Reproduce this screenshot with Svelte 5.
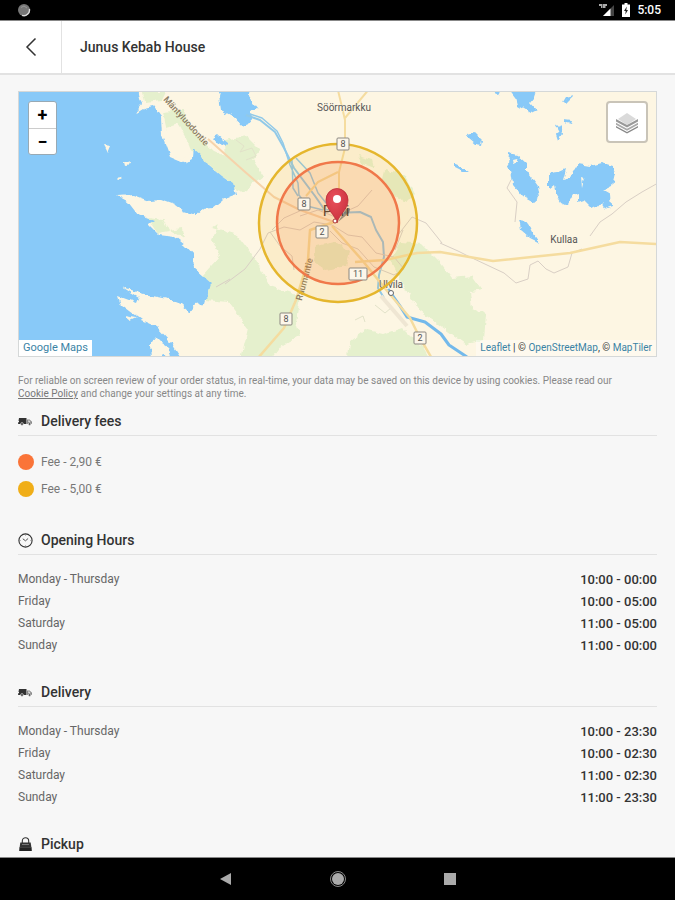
<script lang="ts">
    type Row = {
        days: string;
        time: string;
    };

    type Schedule = {
        title: string;
        icon: 'clock' | 'truck' | 'bag';
        rows: Row[];
    };

    const fees = [
        {label: 'Fee - 2,90 €', level: 'near'},
        {label: 'Fee - 5,00 €', level: 'far'}
    ];

    const schedules: Schedule[] = [
        {
            title: 'Opening Hours',
            icon: 'clock',
            rows: [
                {days: 'Monday - Thursday', time: '10:00 - 00:00'},
                {days: 'Friday', time: '10:00 - 05:00'},
                {days: 'Saturday', time: '11:00 - 05:00'},
                {days: 'Sunday', time: '11:00 - 00:00'}
            ]
        },
        {
            title: 'Delivery',
            icon: 'truck',
            rows: [
                {days: 'Monday - Thursday', time: '10:00 - 23:30'},
                {days: 'Friday', time: '10:00 - 02:30'},
                {days: 'Saturday', time: '11:00 - 02:30'},
                {days: 'Sunday', time: '11:00 - 23:30'}
            ]
        },
        {title: 'Pickup', icon: 'bag', rows: []}
    ];

    const shields = [
        {x: 343, y: 144, road: '8'},
        {x: 304, y: 204, road: '8'},
        {x: 322, y: 232, road: '2'},
        {x: 358, y: 274, road: '11'},
        {x: 286, y: 319, road: '8'},
        {x: 420, y: 338, road: '2'}
    ];
</script>

{#snippet icon(name: string)}
    <svg class="icon" viewBox="0 0 15 15" aria-hidden="true">
        {#if name === 'truck'}
            <path d="M1 4h7.500v6H0l.4-2H1V7H.5z" fill="#333" />
            <path d="M9 5.500h2.600l2.400 2.300V10H9z" fill="#888" />
            <path d="M10.200 6.400h1.200l1.200 1.400h-2.400z" fill="#f7f7f7" />
            <circle cx="4" cy="10" r="1.400" fill="#333" stroke="#f7f7f7" stroke-width=".6" />
            <circle cx="11.600" cy="10" r="1.400" fill="#555" stroke="#f7f7f7" stroke-width=".6" />
        {:else if name === 'clock'}
            <circle cx="7.500" cy="7.500" r="6.600" fill="none" stroke="#333" stroke-width="1.100" />
            <path d="M4.800 5.800l2.700 2 2.600-2.300" fill="none" stroke="#555" stroke-width="1" />
            <path d="M7.500 1.500v1.200M7.500 12.300v1.200M1.500 7.500h1.200M12.300 7.500h1.200" stroke="#777" stroke-width=".7" />
        {:else}
            <path d="M4.300 6V4a3.200 3.200 0 0 1 6.400 0v2" fill="none" stroke="#333" stroke-width="1.100" />
            <path d="M2.300 5.500h10.400l.7 5H1.600z" fill="#333" />
            <path d="M1.400 10.200h12.200l.2 3.800H1.200z" fill="#222" />
            <path d="M4 7.500h7" stroke="#888" stroke-width=".8" />
        {/if}
    </svg>
{/snippet}

<div class="screen">
    <div class="status-bar">
        <svg class="sync" viewBox="0 0 14 14" aria-hidden="true">
            <circle cx="7" cy="7" r="6" fill="#777" />
            <path d="M5 12.300A5.600 5.600 0 0 0 12.400 6" fill="none" stroke="#ddd" stroke-width="1.400" />
            <path d="M4 4.500l3-1.500 3 2" fill="none" stroke="#999" />
        </svg>
        <div class="status-right">
            <svg class="signal" viewBox="0 0 16 14" aria-hidden="true">
                <path d="M0 1h3.500v4H2V3H0zM4 1h4v2H6.500v2H4z" fill="#aaa" />
                <path d="M15 2v11H4z" fill="#444" />
                <path d="M11.500 5.500V13H4z" fill="#fff" />
            </svg>
            <svg class="battery" viewBox="0 0 8 14" aria-hidden="true">
                <path d="M2.500 0h3v1.500H8V14H0V1.500h2.500z" fill="#fff" />
                <path d="M4.800 3.500L2 8h1.700l-.4 3.500L6 7H4.300z" fill="#222" />
            </svg>
            <span class="time">5:05</span>
        </div>
    </div>

    <header>
        <button class="back" type="button" aria-label="Back">
            <svg viewBox="0 0 12 20" aria-hidden="true">
                <path d="M10.500 1.500L2 10l8.500 8.500" fill="none" stroke="#333" stroke-width="1.500" />
            </svg>
        </button>
        <h1>Junus Kebab House</h1>
    </header>

    <main>
        <div class="map">
            <svg class="tiles" viewBox="18 92 639 264" preserveAspectRatio="xMidYMid slice" role="img" aria-label="Delivery area">
                <defs>
                    <filter id="coast" x="-5%" y="-5%" width="110%" height="110%">
                        <feTurbulence type="fractalNoise" baseFrequency="0.14" numOctaves="2" seed="4" />
                        <feDisplacementMap in="SourceGraphic" scale="6" xChannelSelector="R" yChannelSelector="G" />
                    </filter>
                    <radialGradient id="pin" cx="40%" cy="30%" r="75%">
                        <stop offset="0" stop-color="#e8505b" />
                        <stop offset="1" stop-color="#c92f3d" />
                    </radialGradient>
                </defs>
                <rect x="0" y="80" width="700" height="290" fill="#fdf6e3" />

                <!-- forest -->
                <g fill="#e5f0cd" filter="url(#coast)">
                    <path d="M163 112l20-2 10 22 20 18 18 8 6 24-14-4-20-18-12-8-10-14-14-6z" />
                    <path d="M142 92h24l-4 8-18 2zM225 140l22-4 14 14-8 10 10 16-20 16-16-6z" />
                    <path d="M212 228l26 8 18 24 14 26 30 10-4 26 4 14-18 10-14 18h-28l8-36-20-26-44-4 18-22 18-20-8-16 8-18z" />
                    <path d="M147 217l16 2 6 12-12 2zM170 230l12-2 2 10z" />
                    <path d="M385 170l20 6 10 18-8 8-16-8-8-16zM358 156l14 4 2 8-12-4z" />
                    <path d="M316 246l20-4 14 10-4 14-20 4-12-8z" />
                    <path d="M400 242l22 2 18 18 12 16 20-2 10 14-12 2 2 16 14 6-2 26-18 4-28-20-20-14-18-30-10-20z" />
                    <path d="M350 342l16-12 18 4 18-6 20 20 6 10h-80z" />
                </g>
                <!-- fields inside the western peninsula -->
                <path d="M166 128l12-4 10 18 4 10-10 8-10-6z" fill="#fdf6e3" filter="url(#coast)" />

                <!-- sea and lakes -->
                <g fill="#88c9f8" filter="url(#coast)">
                    <path d="M0 80H138l1 14 3 11-6 8 8-5 9-2 8 11 1 18 8 22 14 6 9-5 1-9 9 8 6 9 12 10 12 8 3 11-14 5-10 8-9 1-7 6-13-4-8-6-14-5-12 1-16-6-16 1 11 6 10 13 16 6-5 4 10 10 16 2 10 8 9 10 1 14 16 14-6 20-10 1-6 8-9-8-13-5-24-5-22-7 18 11-2 5-19-7 3 9 20 15 16 7 12 13 17 26-10 15H0z" />
                    <path d="M222 84h28l-1 12 9 12-8 3 2 11-10 4-8-9-13-7-2-14z" />
                    <path d="M213 138l5-3 10 8-3 3-8-3zM223 182l7 2 2 8-4 6-5-1z" />
                    <path d="M510 90h26l-3 9-3 4 6 7-6 3-12-7-2-8zM493 88h8l-3 9zM563 102l3-5 8-2-4 4-5 5zM564 120l8 1-1 3-7-2zM556 126l6-2-1 6 1 4-4 6-2-6 3-2z" />
                    <path d="M468 134l6-2 8 8-1 5-6-1-6-5zM453 163l5 2 10 7-5 0-10-5z" />
                    <path d="M509 153l8 2 10 9 0 7 11 15 2 12-6 5-11-6-10-12-2-15-3-7z" />
                    <path d="M549 174l8-1 9-4-3 11 6-2 9-14 12 2 12-3 10 3 3 7-3 13-8 4 7 4 1 12-6 2-4-6-6 7-6-3-6-6-6 2 0-8-6 2-5 9-6-3-5-8-2-8-5 4z" />
                    <path d="M519 219l6 1 6 8 3 6 6 9-10-5-9-8z" />
                </g>
                <g fill="#fdf6e3" filter="url(#coast)">
                    <path d="M104 145l7 1-3 7zM125 161l4 0 1 3-4 1zM101 178l3 2M119 176l3 2-3 2-3-1zM108 180l6 2zM512 159l4-1 2 4-5 2zM582 178l3 1-2 8z" />
                    <path d="M124 316l12 2-6 3zM150 345l6-8 6 6 6 4 2 10-8-2-4 4-7 0zM134 148l3-1z" />
                </g>

                <!-- river -->
                <g fill="none" stroke="#91c9e8" stroke-linejoin="round">
                    <path d="M246 115l14 5 15 12 9 16 10 20 9 12 12 16 9 13 13 4 23-1 11 5 5 13 7 12 1 15-5 18-1 13 6 10" stroke-width="2" />
                    <path d="M250 114l12 4 15 13 6 12 7 22 8 18 1 12 8 11 16 4M292 160l1 28 5 8M296 158l14 15 8 20 8 10" stroke-width="1.500" />
                    <path d="M388 289l12 17 7 11 18 5 16 12 8 11 18 12" stroke="#73b9eb" stroke-width="3" />
                </g>

                <!-- minor roads -->
                <g fill="none" stroke="#d9cfc5" stroke-width="1">
                    <path d="M225 284l20-15 15-20 8-16 16-6 16 3 14-8 18 3 16 10 14 2 14 16 18 4 10 12-10 6-20-8-16-18-16-6-12-12M270 232l10 14 12 10 2 14M340 214l18-8 14-16M302 210l-18 8-12 12M300 216l18-6 20 8" />
                    <path d="M440 243l18 8 12 6 34 16 12 10 12-4 2-14 8-4 8 8 8 4 14-6 4-14 10-4M511 180l-4 8 10 14-2 20M590 236l10-14 12-8 14-12 16-10 16-9" />
                    <path d="M398 235l14-18 14 6 16 20M395 250l8-20M216 287l14-8" />
                    <path d="M236 140l8 6-4 6 12-4 4 8-10 4M355 320l8-4 2 6M375 305l10 8 6-5 8 10" stroke="#e2e2c9" />
                </g>

                <!-- main roads -->
                <g fill="none" stroke="#f5dc9f" stroke-width="2.500" stroke-linejoin="round">
                    <path d="M208 139l36 32 30 26 26 13 34 12" stroke="#f6d3ab" stroke-width="2" />
                    <path d="M337 86l8 34 0 28-6 24v36M370 88l-25 30M338 172l-20 10-12 14" stroke-width="2" />
                    <path d="M334 222l-24 8-2 30-12 40-12 28-26 30" />
                    <path d="M332 226l30 34 26 32 22 26 10 20 14 24M355 262l30-2 32-7 23-1 53 9 77-8 50-11 37 2" />
                </g>
                <path d="M381 296l26 30" stroke="#efe6d3" stroke-width="4" />

                <g class="places">
                    <text x="344" y="111">Söörmarkku</text>
                    <text x="564" y="243">Kullaa</text>
                    <text x="391" y="288">Ulvila</text>
                    <text class="city" x="336" y="216">Pori</text>
                </g>
                <text class="road" transform="translate(166 97) rotate(48)" x="0" y="4">Mäntyluodontie</text>
                <text class="road" transform="translate(298 300) rotate(-75)" x="0" y="4">Raumantie</text>
                <circle cx="391" cy="293" r="2.500" fill="#fff" stroke="#666" />

                <g class="zones">
                    <circle cx="338" cy="223" r="79" fill="#f0ae18" fill-opacity=".12" stroke="#e5b62d" />
                    <circle cx="338" cy="223" r="61" fill="#fa7438" fill-opacity=".16" stroke="#f0784a" />
                </g>

                {#each shields as {x, y, road}}
                    <rect x={x - 3 - 3 * road.length} y={y - 6} width={6 + 6 * road.length} height="12" rx="1" fill="#fcf6ea" stroke="#8b8780" />
                    <text class="shield" {x} y={y + 3}>{road}</text>
                {/each}

                <path d="M338 222l8-13q6-3 3 4z" fill="#333" opacity=".45" />
                <path d="M337 223c-2-9-11-13-11-23a11 11.500 0 0 1 22 0c0 10-9 14-11 23z" fill="url(#pin)" stroke="#b92c38" stroke-width=".8" />
                <circle cx="337" cy="199" r="4" fill="#fff" />
                <circle cx="335" cy="221" r="2" fill="#fff" stroke="#a33" />
            </svg>

            <div class="zoom-control">
                <button type="button" aria-label="Zoom in">+</button>
                <button type="button" aria-label="Zoom out">−</button>
            </div>
            <button class="layers" type="button" aria-label="Layers">
                <svg viewBox="0 0 26 26" aria-hidden="true">
                    <path d="M13 4l9 6-9 6-9-6z" fill="#dadada" />
                    <path d="M2 10l11 6 11-6v2.500l-11 6-11-6z" fill="#999" />
                    <path d="M2 13.700l11 6 11-6v2l-11 6-11-6z" fill="#aaa" />
                    <path d="M2 17l11 6 11-6v1.500l-11 6-11-6z" fill="#888" />
                </svg>
            </button>
            <a class="google" href="#google-maps">Google Maps</a>
            <div class="attribution">
                <a href="#leaflet">Leaflet</a> | © <a href="#osm">OpenStreetMap</a>, © <a href="#maptiler">MapTiler</a>
            </div>
        </div>

        <p class="note">
            For reliable on screen review of your order status, in real-time, your data may be saved on this device by using cookies. Please read our
            <a href="#cookies">Cookie Policy</a> and change your settings at any time.
        </p>

        <section class="fees">
            <h2>{@render icon('truck')}Delivery fees</h2>
            <ul>
                {#each fees as fee}
                    <li><span class="dot {fee.level}"></span>{fee.label}</li>
                {/each}
            </ul>
        </section>

        {#each schedules as schedule}
            <section>
                <h2>{@render icon(schedule.icon)}{schedule.title}</h2>
                {#if schedule.rows.length}
                    <table>
                        <tbody>
                            {#each schedule.rows as row}
                                <tr>
                                    <th scope="row">{row.days}</th>
                                    <td>{row.time}</td>
                                </tr>
                            {/each}
                        </tbody>
                    </table>
                {/if}
            </section>
        {/each}
    </main>

    <nav>
        <button type="button" aria-label="Back">
            <svg viewBox="0 0 18 18" aria-hidden="true"><path d="M14 3v12L3 9z" fill="#aaa" /></svg>
        </button>
        <button type="button" aria-label="Home">
            <svg viewBox="0 0 18 18" aria-hidden="true">
                <circle cx="9" cy="9" r="7.500" fill="none" stroke="#888" />
                <circle cx="9" cy="9" r="6" fill="#aaa" />
            </svg>
        </button>
        <button type="button" aria-label="Recent apps">
            <svg viewBox="0 0 18 18" aria-hidden="true"><path d="M3 3h12v12H3z" fill="#aaa" /></svg>
        </button>
    </nav>
</div>

<style>
    :global(body) {
        background: #f7f7f7;
    }

    .screen {
        display: flex;
        flex-direction: column;
        height: 100vh;
        font-family: Roboto, "Liberation Sans", sans-serif;
        font-size: 13px;
        color: #333;
    }

    button {
        padding: 0;
        border: none;
        background: none;
        font-family: inherit;
        cursor: pointer;
    }

    .status-bar {
        display: flex;
        flex: none;
        align-items: center;
        justify-content: space-between;
        height: 20px;
        padding: 0 14px 0 17px;
        border-bottom: 1px solid #888;
        background: #000;
    }

    .sync {
        width: 14px;
        height: 14px;
    }

    .status-right {
        display: flex;
        align-items: center;
        gap: 7px;
    }

    .signal {
        width: 16px;
        height: 14px;
    }

    .battery {
        width: 8px;
        height: 14px;
    }

    .time {
        font-size: 12px;
        font-weight: 500;
        color: #fff;
    }

    header {
        display: flex;
        flex: none;
        height: 52px;
        border-bottom: 2px solid #e2e2e2;
        background: #fff;
    }

    .back {
        display: flex;
        align-items: center;
        justify-content: center;
        width: 62px;
        border-right: 1px solid #e2e2e2;
    }

    .back svg {
        width: 12px;
        height: 20px;
    }

    h1 {
        align-self: center;
        margin: 0 0 0 18px;
        font-size: 14px;
        font-weight: 500;
    }

    main {
        flex: 1;
        min-height: 0;
        padding: 16px 18px 0;
        overflow-y: auto;
        scrollbar-width: none;
    }

    .map {
        position: relative;
        height: 264px;
        border: 1px solid #d5d8d8;
        overflow: hidden;
    }

    .tiles {
        display: block;
        width: 100%;
        height: 100%;
    }

    .places text {
        font-size: 10px;
        fill: #555;
        text-anchor: middle;
        stroke: #fdf6e3;
        stroke-width: 1px;
        paint-order: stroke;
    }

    .places .city {
        font-size: 15px;
        fill: #333;
    }

    .road {
        font-size: 9px;
        font-weight: 500;
        fill: #8a7b62;
    }

    .shield {
        font-size: 9px;
        fill: #555;
        text-anchor: middle;
    }

    .zones circle {
        stroke-width: 2.5px;
    }

    .zoom-control {
        position: absolute;
        top: 9px;
        left: 9px;
        border: 1px solid #98a9b4;
        border-radius: 3px;
        background: #fff;
        overflow: hidden;
    }

    .zoom-control button {
        display: block;
        width: 27px;
        height: 26px;
        font-size: 18px;
        font-weight: 700;
        line-height: 24px;
        color: #000;
    }

    .zoom-control button + button {
        border-top: 1px solid #ccc;
    }

    .layers {
        position: absolute;
        top: 9px;
        right: 8px;
        display: flex;
        align-items: center;
        justify-content: center;
        width: 42px;
        height: 42px;
        border: 2px solid #c9c4b8;
        border-radius: 4px;
        background: #fff;
    }

    .layers svg {
        width: 26px;
        height: 26px;
    }

    .map a {
        color: #3b83a5;
        text-decoration: none;
    }

    .google {
        position: absolute;
        bottom: 0;
        left: 0;
        padding: 0 4px;
        background: #fff;
        font-size: 11px;
        line-height: 16px;
    }

    .attribution {
        position: absolute;
        right: 0;
        bottom: 0;
        padding: 0 4px;
        background: rgba(255, 255, 255, 0.4);
        font-size: 10px;
        line-height: 16px;
    }

    .note {
        margin: 17px 0 7px;
        font-size: 10px;
        line-height: 13px;
        color: #888;
    }

    .note a {
        color: #777;
        white-space: nowrap;
    }

    section {
        margin-bottom: 22px;
    }

    section.fees {
        margin-bottom: 24px;
    }

    h2 {
        display: flex;
        align-items: center;
        gap: 8px;
        margin: 0;
        border-bottom: 1px solid #e2e2e2;
        font-size: 14px;
        font-weight: 500;
        line-height: 28px;
    }

    .icon {
        width: 15px;
        height: 15px;
    }

    ul {
        margin: 0;
        padding: 12px 0 0;
        list-style: none;
    }

    li {
        display: flex;
        align-items: center;
        gap: 7px;
        height: 27px;
        font-size: 12px;
        color: #777;
    }

    .dot {
        width: 16px;
        height: 16px;
        border-radius: 50%;
    }

    .near {
        background: #fa7438;
    }

    .far {
        background: #f0ae18;
    }

    table {
        width: 100%;
        margin-top: 13px;
        border-collapse: collapse;
    }

    th,
    td {
        height: 22px;
        padding: 0;
    }

    th {
        font-size: 12px;
        font-weight: 400;
        text-align: left;
        color: #666;
    }

    td {
        font-weight: 500;
        text-align: right;
    }

    nav {
        display: flex;
        flex: none;
        align-items: center;
        justify-content: center;
        gap: 94px;
        height: 42px;
        border-top: 1px solid #888;
        background: #000;
    }

    nav svg {
        display: block;
        width: 18px;
        height: 18px;
    }
</style>
